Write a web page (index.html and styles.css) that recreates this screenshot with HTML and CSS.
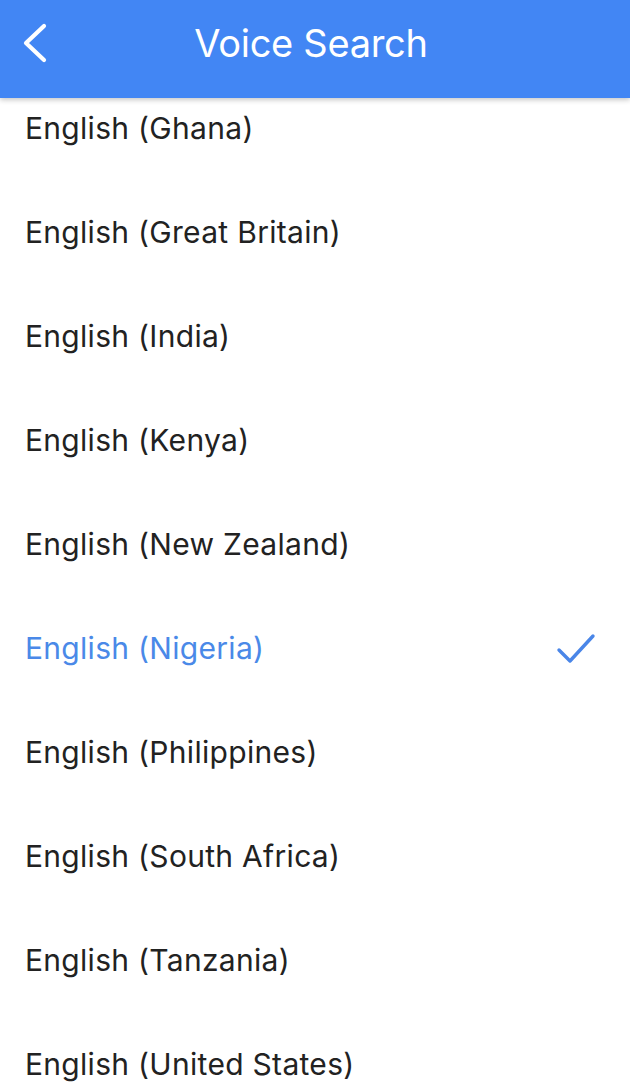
FILE: index.html
```html
<!DOCTYPE html>
<html>
<head>
<meta charset="utf-8">
<link rel="stylesheet" href="styles.css">
</head>
<body>
<header class="bar">
  <svg class="back" width="26" height="40" viewBox="0 0 26 40"><path d="M22 3 L4 20 L22 37" fill="none" stroke="#fff" stroke-width="4.2" stroke-linecap="round" stroke-linejoin="round"/></svg>
  <h1 class="title">Voice Search</h1>
</header>
<ul class="list">
  <li class="row">English (Ghana)</li>
  <li class="row">English (Great Britain)</li>
  <li class="row">English (India)</li>
  <li class="row">English (Kenya)</li>
  <li class="row">English (New Zealand)</li>
  <li class="row selected">English (Nigeria)
    <svg class="check" width="40" height="32" viewBox="0 0 40 32"><path d="M3 17 L14 28 L37 3" fill="none" stroke="#4a86e8" stroke-width="3.4" stroke-linecap="round" stroke-linejoin="round"/></svg>
  </li>
  <li class="row">English (Philippines)</li>
  <li class="row">English (South Africa)</li>
  <li class="row">English (Tanzania)</li>
  <li class="row">English (United States)</li>
</ul>
</body>
</html>
```
FILE: styles.css
```css
html, body { margin: 0; padding: 0; background: #fff; }
body { width: 630px; height: 1082px; overflow: hidden; font-family: "Inter", "Roboto", sans-serif; }
.bar {
  position: relative;
  z-index: 2;
  height: 98px;
  background: #4286f4;
  display: flex;
  align-items: center;
  justify-content: center;
  box-shadow: 0 2px 5px rgba(0,0,0,0.22);
}
.back { position: absolute; left: 22px; top: 23px; }
.title {
  margin: -12px 0 0 -8px;
  color: #fff;
  font-weight: 400;
  font-size: 38px;
  letter-spacing: -0.3px;
}
.list { list-style: none; margin: -22px 0 0 0; padding: 0; }
.row {
  height: 104px;
  display: flex;
  align-items: center;
  justify-content: space-between;
  padding: 0 34px 0 25px;
  font-size: 30px;
  color: #222;
  letter-spacing: 0.3px;
}
.row.selected { color: #4a89e8; }
.check { margin-top: 2px; }
```
